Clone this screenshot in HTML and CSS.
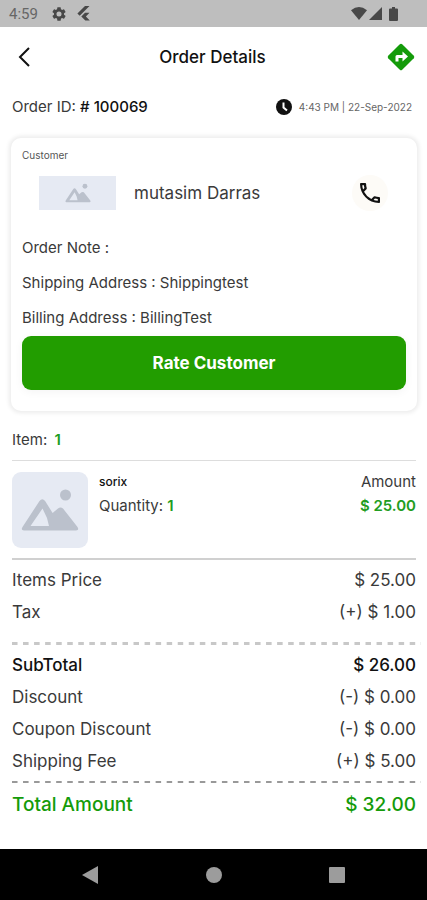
FILE: index.html
```html
<!DOCTYPE html>
<html lang="en">
<head>
<meta charset="utf-8">
<meta name="viewport" content="width=device-width, initial-scale=1">
<title>Order Details</title>
<link rel="stylesheet" href="styles.css">
</head>
<body>
<svg class="defs" aria-hidden="true">
  <symbol id="picture" viewBox="0 0 76 76">
    <circle cx="53.500" cy="23" r="5.500"/>
    <path fill-rule="evenodd" d="M12 58.500q-3.500 0-1.500-3.500L27.500 29q2.800-3.500 5.600 0l7.500 12 5.400-4.500q2.500-2 5 0L65.500 55q2 3.500-1.500 3.500zM18.500 54H37l-2-8-4.500-9.500z"/>
  </symbol>
</svg>
<div class="screen">
  <div class="status">
    <span class="clock">4:59</span>
    <svg class="gear" viewBox="2 2 20 20"><path d="M19.140 12.940c.04-.3.060-.61.060-.94s-.02-.64-.07-.94l2.030-1.580a.49.490 0 0 0 .12-.61l-1.920-3.320a.49.490 0 0 0-.59-.22l-2.390.96a7 7 0 0 0-1.620-.94l-.36-2.540A.48.480 0 0 0 13.920 2.400h-3.840a.48.480 0 0 0-.47.410l-.36 2.540a7 7 0 0 0-1.620.94l-2.390-.96a.48.480 0 0 0-.59.220L2.740 8.870a.48.480 0 0 0 .12.610l2.030 1.580a6 6 0 0 0 0 1.880l-2.030 1.580a.49.490 0 0 0-.12.610l1.920 3.320c.12.220.370.290.590.220l2.390-.96c.5.380 1.030.7 1.620.94l.36 2.540c.05.240.240.410.480.410h3.840c.24 0 .44-.17.470-.41l.36-2.540a7 7 0 0 0 1.620-.94l2.390.96c.22.080.470 0 .59-.22l1.920-3.320a.48.480 0 0 0-.12-.61zM12 15.600a3.600 3.600 0 1 1 0-7.200 3.600 3.600 0 0 1 0 7.200z"/></svg>
    <svg class="flutter" viewBox="0 0 13 15"><path d="M8 0h4.500L2.700 9.800.4 7.500zM8 6.800h4.500L8.900 10.400l3.900 4H8.300l-4-4z"/></svg>
    <span class="grow"></span>
    <svg class="wifi" viewBox="0 0 16 13"><path d="M0 3.200Q8-3 16 3.200L8 13z"/></svg>
    <svg class="signal" viewBox="0 0 13 13"><path d="M13 0v13H0z"/></svg>
    <svg class="battery" viewBox="0 0 9 14"><path d="M3 0h3v1.500h2q1 0 1 1V13q0 1-1 1H1q-1 0-1-1V2.500q0-1 1-1h2z"/></svg>
  </div>
  <header class="appbar">
    <button class="icon-button" aria-label="Back"><svg class="back" viewBox="0 0 12 20"><path d="M11 1 2 10l9 9"/></svg></button>
    <h1>Order Details</h1>
    <button class="icon-button" aria-label="Directions"><svg class="directions" viewBox="0 0 28 28"><path class="sign" d="M12.800 1.200q1.200-1 2.400 0L26.800 12.800q1 1.200 0 2.400L15.200 26.800q-1.200 1-2.400 0L1.200 15.200q-1-1.200 0-2.400z"/><path class="turn" d="M8.500 18.500v-5q0-1.500 1.500-1.500h5.500V8.500l5.500 5-5.500 5V15H11.500v3.500z"/></svg></button>
  </header>
  <main>
    <div class="order-row">
      <span>Order ID: <b># 100069</b></span>
      <span class="time"><svg class="clock-icon" viewBox="0 0 16 16"><circle cx="8" cy="8" r="8"/><path d="M7.500 3.500V8.500l3.500 3"/></svg>4:43 PM | 22-Sep-2022</span>
    </div>
    <section class="card">
      <h2>Customer</h2>
      <div class="customer">
        <div class="avatar"><svg viewBox="0 0 76 76"><use href="#picture"/></svg></div>
        <span class="name">mutasim Darras</span>
        <button class="call" aria-label="Call"><svg viewBox="3 3 18 18"><path d="M6.540 5c.06.890.210 1.760.450 2.590l-1.200 1.200c-.41-1.200-.67-2.470-.76-3.790h1.510m9.860 12.020c.85.240 1.720.390 2.600.450v1.490c-1.320-.09-2.590-.35-3.800-.75l1.200-1.190M7.500 3H4c-.55 0-1 .45-1 1 0 9.390 7.610 17 17 17 .55 0 1-.45 1-1v-3.490c0-.55-.45-1-1-1-1.240 0-2.450-.2-3.570-.57a1 1 0 0 0-1.020.24l-2.200 2.200a15.100 15.100 0 0 1-6.590-6.590l2.200-2.200c.28-.28.360-.67.250-1.020A11.400 11.400 0 0 1 8.500 4c0-.55-.45-1-1-1z"/></svg></button>
      </div>
      <p>Order Note :</p>
      <p>Shipping Address : Shippingtest</p>
      <p>Billing Address : BillingTest</p>
      <button class="rate">Rate Customer</button>
    </section>
    <div class="count">Item: <b>1</b></div>
    <article class="item">
      <div class="thumb"><svg viewBox="0 0 76 76"><use href="#picture"/></svg></div>
      <div class="details"><strong>sorix</strong><span>Quantity: <b>1</b></span></div>
      <div class="amount"><span>Amount</span><b>$ 25.00</b></div>
    </article>
    <dl>
      <div><dt>Items Price</dt><dd>$ 25.00</dd></div>
      <div><dt>Tax</dt><dd>(+) $ 1.00</dd></div>
    </dl>
    <hr class="dashes light">
    <dl>
      <div class="subtotal"><dt>SubTotal</dt><dd>$ 26.00</dd></div>
      <div><dt>Discount</dt><dd>(-) $ 0.00</dd></div>
      <div><dt>Coupon Discount</dt><dd>(-) $ 0.00</dd></div>
      <div><dt>Shipping Fee</dt><dd>(+) $ 5.00</dd></div>
    </dl>
    <hr class="dashes">
    <dl>
      <div class="total"><dt>Total Amount</dt><dd>$ 32.00</dd></div>
    </dl>
  </main>
  <nav>
    <button aria-label="Back"><svg viewBox="0 0 18 18"><path d="M17 0v18L1 9z"/></svg></button>
    <button aria-label="Home"><svg viewBox="0 0 18 18"><circle cx="9" cy="9" r="8"/></svg></button>
    <button aria-label="Recent apps"><svg viewBox="0 0 18 18"><rect x="1" y="1" width="16" height="16" rx="1"/></svg></button>
  </nav>
</div>
</body>
</html>
```
FILE: styles.css
```css
* { box-sizing: border-box; }
body {
  margin: 0;
  background: #fff;
  color: #3a3a3a;
  font: 15px/20px Inter, "Liberation Sans", sans-serif;
}
h1, h2, p, dl, dd { margin: 0; }
button {
  border: 0;
  padding: 0;
  background: none;
  font: inherit;
  color: inherit;
}
svg { display: block; flex: none; }
.defs { position: absolute; width: 0; height: 0; }
.screen { min-height: 100vh; display: flex; flex-direction: column; }

.status {
  height: 27px;
  display: flex;
  align-items: center;
  padding: 0 29px 0 9px;
  background: #bebebe;
  color: #666;
  font: 15px/26px Roboto, sans-serif;
}
.status svg { fill: #484848; }
.gear { width: 14px; height: 14px; margin-left: 14px; }
.flutter { width: 13px; height: 15px; margin-left: 11px; }
.grow { flex: 1; }
.wifi { width: 16px; height: 13px; }
.signal { width: 13px; height: 13px; margin-left: 2px; }
.battery { width: 9px; height: 14px; margin-left: 7px; }

.appbar {
  height: 60px;
  display: flex;
  align-items: center;
  justify-content: space-between;
  padding: 0 12px 0 10px;
}
h1 { font-size: 17px; font-weight: 500; color: #111; }
.icon-button { width: 28px; height: 28px; display: grid; place-items: center; }
.back { width: 12px; height: 20px; fill: none; stroke: #111; stroke-width: 2; }
.directions { width: 28px; height: 28px; }
.sign { fill: #149b0a; }
.turn { fill: #fff; }

main { flex: 1; padding: 0 11px 0 12px; }
.order-row {
  height: 40px;
  display: flex;
  align-items: center;
  justify-content: space-between;
}
.order-row b { font-weight: 500; color: #111; }
.time {
  display: flex;
  align-items: center;
  gap: 7px;
  padding-right: 4px;
  font-size: 10px;
  color: #666;
}
.clock-icon { width: 16px; height: 16px; fill: #111; }
.clock-icon path { fill: none; stroke: #fff; stroke-width: 2; }

.card {
  margin: 11px -1px 0;
  padding: 7px 11px 21px;
  border-radius: 10px;
  box-shadow: 0 0 4px 2px #ececec;
}
h2 { font-size: 10px; font-weight: 400; line-height: 20px; color: #555; }
.customer {
  height: 56px;
  display: flex;
  align-items: center;
  margin-bottom: 1px;
  padding: 0 18px 0 17px;
}
.avatar {
  width: 77px;
  height: 34px;
  display: grid;
  place-items: center;
  background: #e6eaf3;
}
.avatar svg { width: 34px; height: 34px; }
.avatar svg, .thumb svg { fill: #bbc1cc; }
.name { flex: 1; margin-left: 18px; font-size: 17px; }
.call {
  width: 36px;
  height: 36px;
  display: grid;
  place-items: center;
  border-radius: 50%;
  background: #fdfbf7;
}
.call svg { width: 20px; height: 20px; fill: #111; }
.card p { height: 35px; padding-top: 16px; line-height: 20px; }
.rate {
  width: 100%;
  height: 54px;
  display: block;
  margin-top: 9px;
  border-radius: 9px;
  background: #229d00;
  box-shadow: 0 2px 10px #f4f4f4;
  color: #fff;
  font-size: 17px;
  font-weight: 700;
}

.count { padding: 19px 0 10px; border-bottom: 1px solid #ddd; }
.count b { margin-left: 3px; }
.count b, .details b, .amount b { color: #229d22; font-weight: 600; }
.item {
  display: flex;
  padding: 11px 0 10px;
  border-bottom: 2px solid #d0d0d0;
}
.thumb {
  width: 76px;
  height: 76px;
  border-radius: 9px;
  background: #e6eaf3;
}
.details, .amount { display: flex; flex-direction: column; gap: 4px; }
.details { flex: 1; padding-left: 11px; }
.details strong { font-size: 12px; font-weight: 500; color: #111; }
.amount { text-align: right; }

dl div { height: 32px; display: flex; align-items: center; justify-content: space-between; }
dl { padding-top: 4px; font-size: 17px; }
dl .subtotal { font-weight: 500; color: #111; }
dl .total { height: 36px; font-size: 19px; font-weight: 500; color: #149b0a; }
/* The extra 5px on the right holds the empty end of the last dash tile. */
.dashes {
  height: 2px;
  margin: 4px -5px 0 0;
  border: 0;
  background: linear-gradient(90deg, #999 50%, transparent 50%) 0 0 / 11px 100% round;
}
.dashes.light {
  height: 3px;
  margin-top: 14px;
  background-image: linear-gradient(90deg, #c8c8c8 50%, transparent 50%);
}

nav {
  height: 51px;
  display: flex;
  align-items: center;
  justify-content: space-between;
  padding: 0 81px;
  background: #000;
}
nav svg { width: 18px; height: 18px; fill: #9c9c9c; }
```
